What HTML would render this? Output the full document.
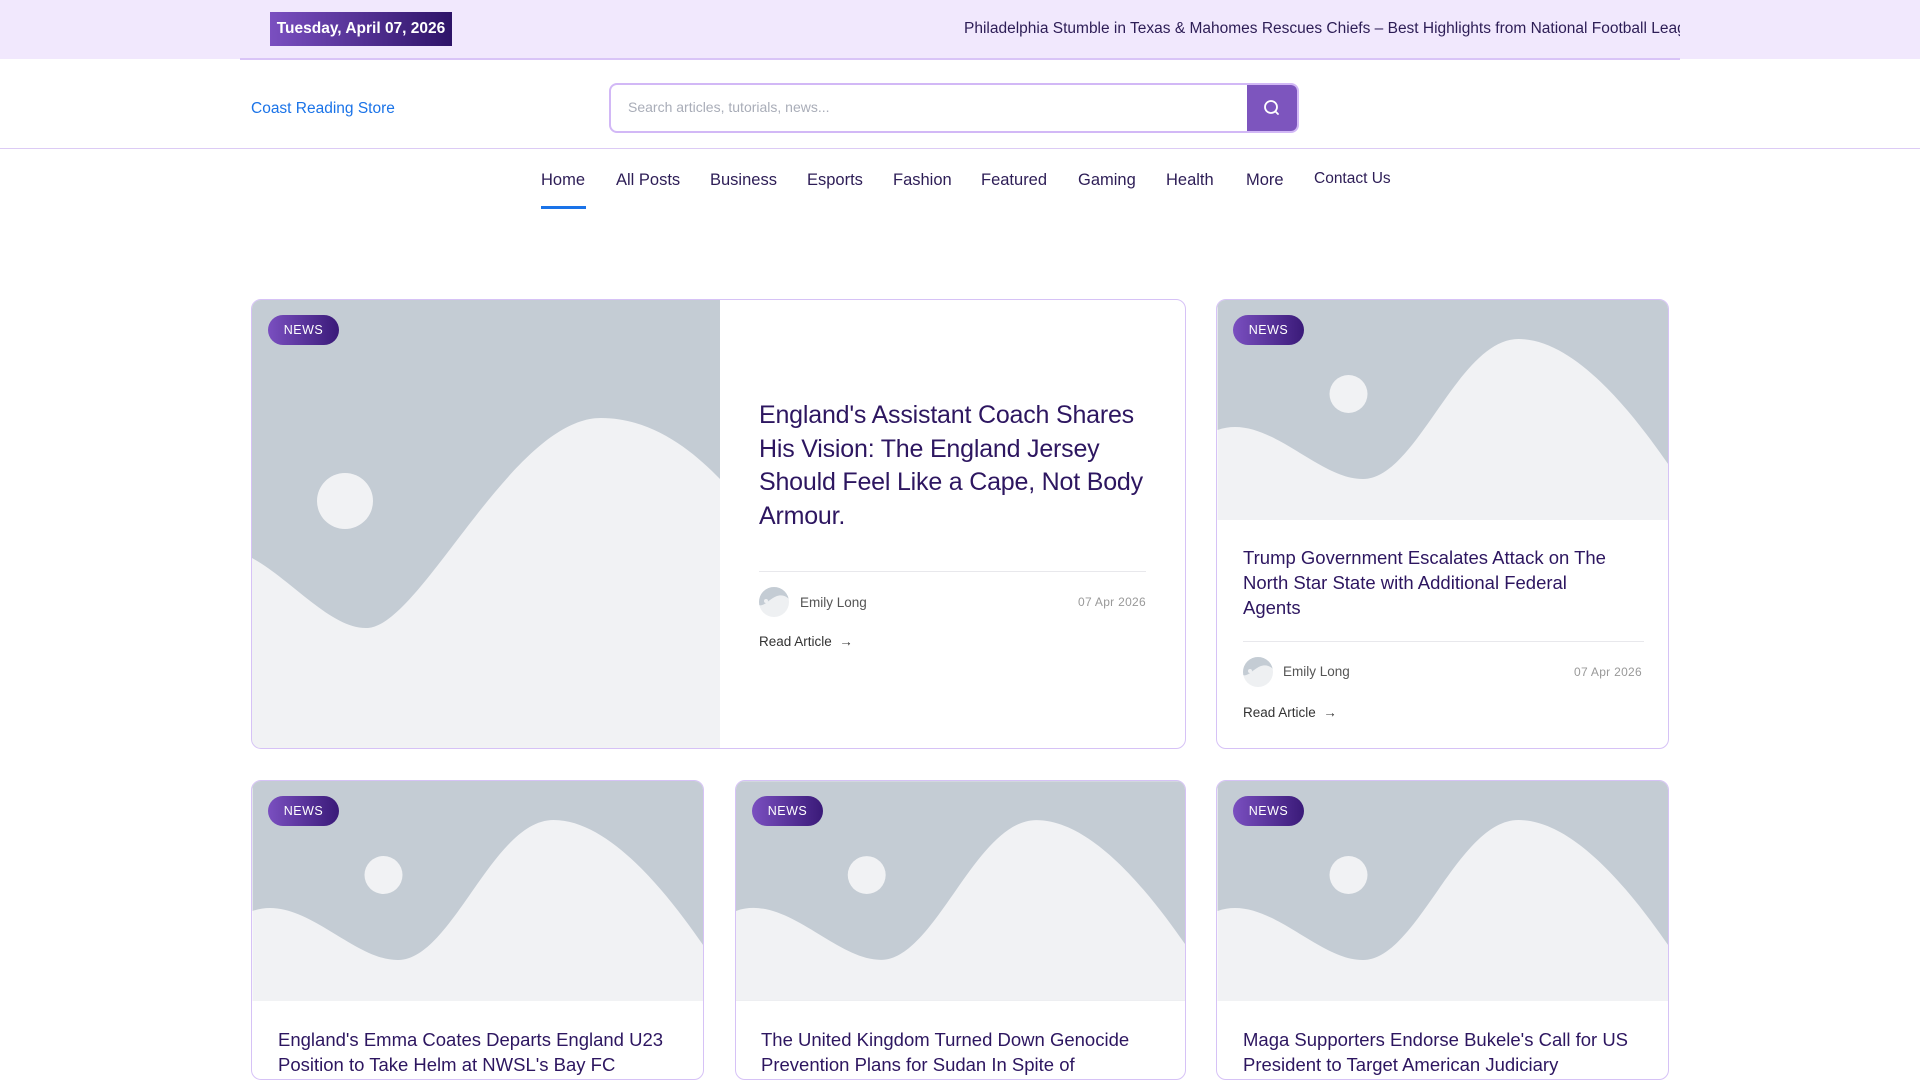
<!DOCTYPE html>
<html><head><meta charset="utf-8">
<style>
*{box-sizing:border-box;margin:0;padding:0}
html,body{width:1920px;height:1080px;overflow:hidden}
body{background:#fff;font-family:"Liberation Sans",sans-serif;position:relative}
.abs{position:absolute}
.topbar{left:0;top:0;width:1920px;height:59px;background:#f1e8fd}
.topline{left:240px;top:58px;width:1440px;height:2px;background:#d9c4f7}
.date{left:270px;top:12px;width:182px;height:34px;background:linear-gradient(90deg,#7a4fc0,#2e1468);color:#fff;font-weight:bold;font-size:15.5px;line-height:34px;text-align:center}
.ticker{left:964px;top:20px;width:716px;height:22px;overflow:hidden;white-space:nowrap;font-size:15.5px;color:#2d1d56}
.logo{left:251px;top:100px;font-size:15.5px;color:#1a73e8}
.search{left:609px;top:83px;width:690px;height:50px;border:2px solid #d2b8f6;border-radius:8px;overflow:hidden}
.search span{position:absolute;left:17px;top:14px;font-size:14px;color:#a9adb8}
.search .btn{position:absolute;right:0;top:0;width:50px;height:46px;background:#7d55be}
.hline{left:0;top:148px;width:1920px;height:1px;background:#dccbf5}
.nav{top:171px;font-size:16.5px;color:#2d1d56}
.ul{left:541px;top:206px;width:45px;height:3px;background:#1a73e8}
.card{border:1.5px solid #d6c2f6;border-radius:10px;overflow:hidden;background:#fff}
.badge{position:absolute;width:71px;height:30px;border-radius:15px;background:linear-gradient(90deg,#7a4fc0,#3a1a78);color:#fff;font-size:12.5px;letter-spacing:.5px;line-height:30px;text-align:center}
.t{color:#2d1660;position:absolute}
.meta{position:absolute;font-size:13.5px;color:#555}
.dt{position:absolute;font-size:12px;color:#999;letter-spacing:.3px}
.div{position:absolute;height:1px;background:#e8e8ec}
</style></head><body>
<div class="abs topbar"></div>
<div class="abs topline"></div>
<div class="abs date">Tuesday, April 07, 2026</div>
<div class="abs ticker">Philadelphia Stumble in Texas &amp; Mahomes Rescues Chiefs – Best Highlights from National Football League</div>
<div class="abs logo">Coast Reading Store</div>
<div class="abs search"><span>Search articles, tutorials, news...</span><div class="btn"><svg width="50" height="46" viewBox="0 0 50 46"><circle cx="24" cy="22" r="6" fill="none" stroke="#fff" stroke-width="1.8"/><line x1="28.5" y1="26.5" x2="31" y2="29" stroke="#fff" stroke-width="1.8" stroke-linecap="round"/></svg></div></div>
<div class="abs hline"></div>
<div class="abs nav" style="left:541px">Home</div>
<div class="abs nav" style="left:616px">All Posts</div>
<div class="abs nav" style="left:710px">Business</div>
<div class="abs nav" style="left:807px">Esports</div>
<div class="abs nav" style="left:893px">Fashion</div>
<div class="abs nav" style="left:981px">Featured</div>
<div class="abs nav" style="left:1078px">Gaming</div>
<div class="abs nav" style="left:1166px">Health</div>
<div class="abs nav" style="left:1246px">More</div>
<div class="abs nav" style="left:1314px;font-size:15.5px;top:170px">Contact Us</div>
<div class="abs ul"></div>

<div class="abs card" style="left:251px;top:299px;width:935px;height:450px">
<svg style="position:absolute;left:0;top:0" width="468" height="450" viewBox="0 0 468 450"><rect width="468" height="450" fill="#c4ccd4"/><path d="M0 258 C40 280 80 330 116 328 C170 324 260 118 349 118 C400 118 440 150 468 179 L468 450 L0 450Z" fill="#f1f2f4"/><circle cx="93" cy="201" r="28" fill="#f1f2f4"/></svg>
<div class="badge" style="left:16px;top:15px">NEWS</div>
<div class="t" style="left:507px;top:99px;width:408px;font-size:25px;line-height:33.5px;letter-spacing:-0.2px">England's Assistant Coach Shares His Vision: The England Jersey Should Feel Like a Cape, Not Body Armour.</div>
<div class="div" style="left:507px;top:271px;width:387px"></div>
<svg style="position:absolute;left:507px;top:287px" width="30" height="30" viewBox="0 0 30 30"><defs><clipPath id="c1"><circle cx="15" cy="15" r="15"/></clipPath></defs><g clip-path="url(#c1)"><rect width="30" height="30" fill="#eef0f2"/><path d="M0 18 C5 20 10 12 18 9 C24 7 28 10 30 12 L30 0 L0 0Z" fill="#c4ccd4"/><circle cx="7" cy="14" r="2" fill="#eef0f2"/></g></svg>
<div class="meta" style="left:548px;top:295px">Emily Long</div>
<div class="dt" style="right:39px;top:295px">07 Apr 2026</div>
<div class="meta" style="left:507px;top:334px;color:#333">Read Article &nbsp;→</div>
</div>

<div class="abs card" style="left:1216px;top:299px;width:453px;height:450px">
<svg style="position:absolute;left:0;top:0" width="453" height="220" viewBox="0 0 452 220"><rect width="452" height="220" fill="#c4ccd4"/><path d="M0 130 C50 112 100 180 146 179 C200 178 240 39 301 39 C360 39 420 120 452 166 L452 220 L0 220Z" fill="#f1f2f4"/><circle cx="131" cy="94" r="19" fill="#f1f2f4"/></svg>
<div class="badge" style="left:16px;top:15px">NEWS</div>
<div class="t" style="left:26px;top:245px;width:375px;font-size:18.5px;line-height:25px">Trump Government Escalates Attack on The North Star State with Additional Federal Agents</div>
<div class="div" style="left:26px;top:341px;width:401px"></div>
<svg style="position:absolute;left:26px;top:357px" width="30" height="30" viewBox="0 0 30 30"><defs><clipPath id="c2"><circle cx="15" cy="15" r="15"/></clipPath></defs><g clip-path="url(#c2)"><rect width="30" height="30" fill="#eef0f2"/><path d="M0 18 C5 20 10 12 18 9 C24 7 28 10 30 12 L30 0 L0 0Z" fill="#c4ccd4"/><circle cx="7" cy="14" r="2" fill="#eef0f2"/></g></svg>
<div class="meta" style="left:66px;top:364px">Emily Long</div>
<div class="dt" style="right:26px;top:365px">07 Apr 2026</div>
<div class="meta" style="left:26px;top:405px;color:#333">Read Article &nbsp;→</div>
</div>

<div class="abs card" style="left:251px;top:780px;width:453px;height:300px">
<svg style="position:absolute;left:0;top:0" width="453" height="220" viewBox="0 0 452 220"><rect width="452" height="220" fill="#c4ccd4"/><path d="M0 130 C50 112 100 180 146 179 C200 178 240 39 301 39 C360 39 420 120 452 166 L452 220 L0 220Z" fill="#f1f2f4"/><circle cx="131" cy="94" r="19" fill="#f1f2f4"/></svg>
<div class="badge" style="left:16px;top:15px">NEWS</div>
<div class="t" style="left:26px;top:246px;width:410px;font-size:18.5px;line-height:25px">England's Emma Coates Departs England U23 Position to Take Helm at NWSL's Bay FC</div>
</div>
<div class="abs card" style="left:735px;top:780px;width:451px;height:300px">
<svg style="position:absolute;left:0;top:0" width="451" height="220" viewBox="0 0 452 220"><rect width="452" height="220" fill="#c4ccd4"/><path d="M0 130 C50 112 100 180 146 179 C200 178 240 39 301 39 C360 39 420 120 452 166 L452 220 L0 220Z" fill="#f1f2f4"/><circle cx="131" cy="94" r="19" fill="#f1f2f4"/></svg>
<div class="badge" style="left:16px;top:15px">NEWS</div>
<div class="t" style="left:25px;top:246px;width:410px;font-size:18.5px;line-height:25px">The United Kingdom Turned Down Genocide Prevention Plans for Sudan In Spite of</div>
</div>
<div class="abs card" style="left:1216px;top:780px;width:453px;height:300px">
<svg style="position:absolute;left:0;top:0" width="453" height="220" viewBox="0 0 452 220"><rect width="452" height="220" fill="#c4ccd4"/><path d="M0 130 C50 112 100 180 146 179 C200 178 240 39 301 39 C360 39 420 120 452 166 L452 220 L0 220Z" fill="#f1f2f4"/><circle cx="131" cy="94" r="19" fill="#f1f2f4"/></svg>
<div class="badge" style="left:16px;top:15px">NEWS</div>
<div class="t" style="left:26px;top:246px;width:410px;font-size:18.5px;line-height:25px">Maga Supporters Endorse Bukele's Call for US President to Target American Judiciary</div>
</div>
</body></html>
